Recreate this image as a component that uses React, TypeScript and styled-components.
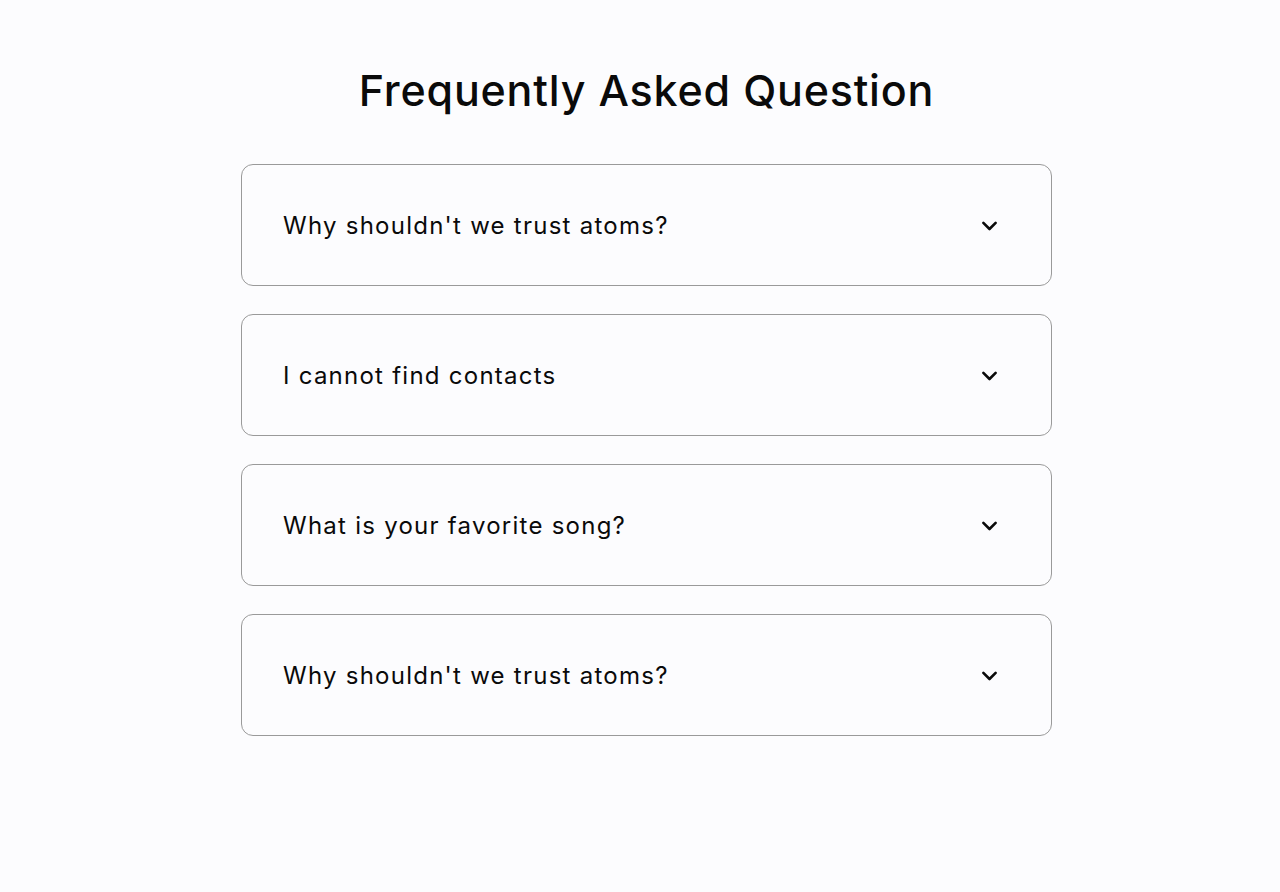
import React from 'react';
import styled, { createGlobalStyle } from 'styled-components';

const GlobalStyle = createGlobalStyle`
  body {
    margin: 0;
    background: #fcfcfe;
    font-family: Inter, 'Noto Sans', sans-serif;
    color: #0a0a0a;
  }
`;

const Page = styled.div`
  display: flex;
  flex-direction: column;
  align-items: center;
  padding: 62px 0 0 13px;
`;

const Title = styled.h1`
  margin: 0 0 46px;
  font-size: 43px;
  font-weight: 500;
  line-height: 56px;
  letter-spacing: 0.8px;
`;

const List = styled.div`
  display: flex;
  flex-direction: column;
  gap: 28px;
  width: 811px;
`;

const Card = styled.div`
  box-sizing: border-box;
  height: 122px;
  display: flex;
  align-items: center;
  justify-content: space-between;
  padding: 0 51px 0 41px;
  border: 1px solid #9a9a9a;
  border-radius: 12px;
  background: #fcfcfe;
`;

const Question = styled.span`
  font-size: 24px;
  font-weight: 400;
  letter-spacing: 1.25px;
`;

const Chevron = () => (
  <svg width="21" height="21" viewBox="0 0 24 24" fill="none" stroke="#0a0a0a" strokeWidth="3" strokeLinecap="round" strokeLinejoin="round">
    <path d="M5 9l7 7 7-7" />
  </svg>
);

const questions = [
  "Why shouldn't we trust atoms?",
  'I cannot find contacts',
  'What is your favorite song?',
  "Why shouldn't we trust atoms?"
];

const App: React.FC = () => (
  <>
    <GlobalStyle />
    <Page>
      <Title>Frequently Asked Question</Title>
      <List>
        {questions.map((q, i) => (
          <Card key={i}>
            <Question>{q}</Question>
            <Chevron />
          </Card>
        ))}
      </List>
    </Page>
  </>
);

export default App;
